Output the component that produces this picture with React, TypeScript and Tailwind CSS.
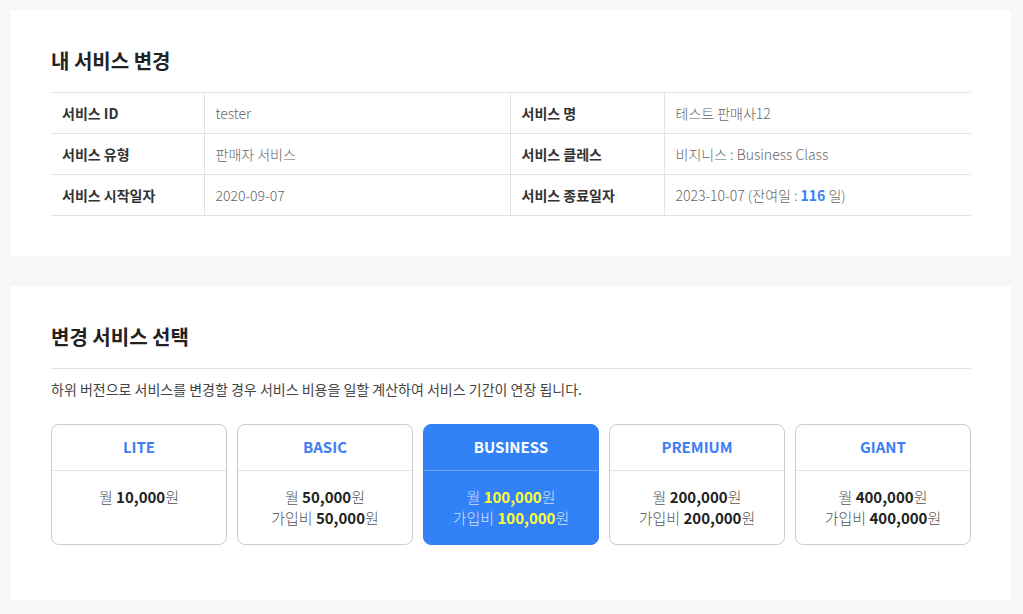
import React from "react";

const plans = [
  { name: "LITE", month: "10,000", join: "" },
  { name: "BASIC", month: "50,000", join: "50,000" },
  { name: "BUSINESS", month: "100,000", join: "100,000" },
  { name: "PREMIUM", month: "200,000", join: "200,000" },
  { name: "GIANT", month: "400,000", join: "400,000" },
];

const App = () => {
  const selected = "BUSINESS";

  return (
    <div
      className="min-h-screen bg-[#f6f7f7] pl-[11px] pr-[12px] py-[10px]"
      style={{ fontFamily: '"Noto Sans CJK KR", "Noto Sans", sans-serif' }}
    >
      {/* INFO: current service */}
      <section className="bg-white px-10 pt-[37px] pb-10">
        <h2 className="text-[20px] font-bold text-[#222] leading-[28px] mb-[17px]">
          내 서비스 변경
        </h2>
        <table className="w-full border-collapse text-[14px] table-fixed">
          <colgroup>
            <col className="w-[153px]" />
            <col className="w-[306px]" />
            <col className="w-[154px]" />
            <col />
          </colgroup>
          <tbody>
            <tr className="h-[41px] border-y border-[#e3e3e3]">
              <th className="text-left font-bold text-[#333] pl-[11px] border-r border-[#e3e3e3]">서비스 ID</th>
              <td className="font-light text-[#666] pl-[11px] border-r border-[#e3e3e3]">tester</td>
              <th className="text-left font-bold text-[#333] pl-[11px] border-r border-[#e3e3e3]">서비스 명</th>
              <td className="font-light text-[#666] pl-[11px]">테스트 판매사12</td>
            </tr>
            <tr className="h-[41px] border-b border-[#e3e3e3]">
              <th className="text-left font-bold text-[#333] pl-[11px] border-r border-[#e3e3e3]">서비스 유형</th>
              <td className="font-light text-[#666] pl-[11px] border-r border-[#e3e3e3]">판매자 서비스</td>
              <th className="text-left font-bold text-[#333] pl-[11px] border-r border-[#e3e3e3]">서비스 클레스</th>
              <td className="font-light text-[#666] pl-[11px]">비지니스 : Business Class</td>
            </tr>
            <tr className="h-[41px] border-b border-[#e3e3e3]">
              <th className="text-left font-bold text-[#333] pl-[11px] border-r border-[#e3e3e3]">서비스 시작일자</th>
              <td className="font-light text-[#666] pl-[11px] border-r border-[#e3e3e3]">2020-09-07</td>
              <th className="text-left font-bold text-[#333] pl-[11px] border-r border-[#e3e3e3]">서비스 종료일자</th>
              <td className="font-light text-[#666] pl-[11px]">
                2023-10-07 (잔여일 : <b className="font-bold text-[#3b82f6]">116</b> 일)
              </td>
            </tr>
          </tbody>
        </table>
      </section>

      {/* INFO: plan select */}
      <section className="bg-white px-10 pt-[37px] pb-[55px] mt-[30px]">
        <h2 className="text-[20px] font-bold text-[#222] leading-[28px] pb-[17px] border-b border-[#e3e3e3]">
          변경 서비스 선택
        </h2>
        <p className="text-[14px] text-[#444] mt-[10px] leading-[20px]">
          하위 버전으로 서비스를 변경할 경우 서비스 비용을 일할 계산하여 서비스 기간이 연장 됩니다.
        </p>
        <ul className="grid grid-cols-5 gap-[10px] mt-[25px]">
          {plans.map((plan) => {
            const active = plan.name === selected;
            return (
              <li
                key={plan.name}
                className={`h-[121px] rounded-lg border flex flex-col ${
                  active ? "bg-[#3381f6] border-[#3381f6]" : "bg-white border-[#cccccc]"
                }`}
              >
                <div
                  className={`h-[46px] flex items-center justify-center text-[15px] font-bold border-b ${
                    active ? "text-white border-[#6ea6f8]" : "text-[#3d7ef5] border-[#e3e3e3]"
                  }`}
                >
                  {plan.name}
                </div>
                <div
                  className={`pt-[15px] text-center text-[15px] leading-[21px] font-light ${
                    active ? "text-[#cfe0fc]" : "text-[#555]"
                  }`}
                >
                  <p>
                    월 <b className={`font-bold ${active ? "text-[#ffff33]" : "text-[#222]"}`}>{plan.month}</b>원
                  </p>
                  {plan.join && (
                    <p>
                      가입비 <b className={`font-bold ${active ? "text-[#ffff33]" : "text-[#222]"}`}>{plan.join}</b>원
                    </p>
                  )}
                </div>
              </li>
            );
          })}
        </ul>
      </section>
    </div>
  );
};

export default App;
